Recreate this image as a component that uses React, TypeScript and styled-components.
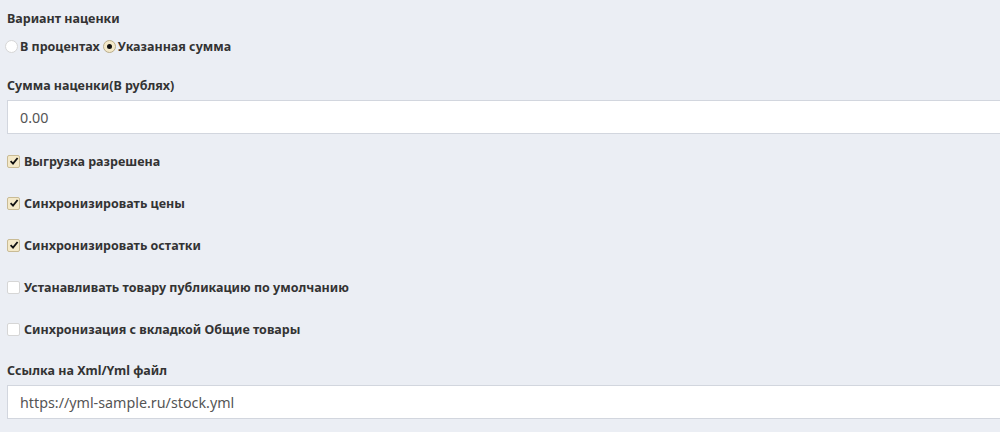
import { createGlobalStyle, styled } from 'styled-components';

const GlobalStyle = createGlobalStyle`
  html, body {
    margin: 0;
    padding: 0;
    background: #ebeef4;
  }
  body {
    font-family: "Noto Sans", "Open Sans", sans-serif;
    color: #333;
  }
`;

const CHECKS = [
  { label: 'Выгрузка разрешена', checked: true },
  { label: 'Синхронизировать цены', checked: true },
  { label: 'Синхронизировать остатки', checked: true },
  { label: 'Устанавливать товару публикацию по умолчанию', checked: false },
  { label: 'Синхронизация с вкладкой Общие товары', checked: false },
];

const CheckIcon = () => (
  <svg width="10" height="10" viewBox="0 0 10 10">
    <path d="M1.6 5.2 L4 7.6 L8.6 2" fill="none" stroke="#111" strokeWidth="1.8" />
  </svg>
);

const App = () => {
  return (
    <Page>
      <GlobalStyle />
      <Label>Вариант наценки</Label>
      <RadioRow>
        <RadioItem>
          <Radio $checked={false} />
          В процентах
        </RadioItem>
        <RadioItem>
          <Radio $checked />
          Указанная сумма
        </RadioItem>
      </RadioRow>

      <Label $top={22}>Сумма наценки(В рублях)</Label>
      <Input>0.00</Input>

      <CheckList>
        {CHECKS.map((c) => (
          <CheckRow key={c.label}>
            <Box $checked={c.checked}>{c.checked && <CheckIcon />}</Box>
            {c.label}
          </CheckRow>
        ))}
      </CheckList>

      <Label $top={24}>Ссылка на Xml/Yml файл</Label>
      <Input>https://yml-sample.ru/stock.yml</Input>
    </Page>
  );
};

export default App;

const Page = styled.div`
  width: 1000px;
  height: 432px;
  overflow: hidden;
  padding: 10px 0 0 7px;
  box-sizing: border-box;
`;

const Label = styled.div<{ $top?: number }>`
  margin-top: ${(p) => p.$top ?? 0}px;
  font-size: 12.5px;
  font-weight: 700;
  line-height: 18px;
  color: #333;
`;

const RadioRow = styled.div`
  display: flex;
  align-items: center;
  gap: 3px;
  margin-top: 9px;
  margin-left: -2px;
  height: 18px;
`;

const RadioItem = styled.label`
  display: flex;
  align-items: center;
  gap: 2px;
  font-size: 12.5px;
  font-weight: 700;
  color: #333;
`;

const Radio = styled.span<{ $checked: boolean }>`
  width: 11px;
  height: 11px;
  border-radius: 50%;
  border: 1px solid ${(p) => (p.$checked ? '#b9ad8c' : '#d6d6d6')};
  background: ${(p) => (p.$checked ? '#f4e9c9' : '#fff')};
  display: flex;
  align-items: center;
  justify-content: center;

  &::after {
    content: '';
    display: ${(p) => (p.$checked ? 'block' : 'none')};
    width: 5px;
    height: 5px;
    border-radius: 50%;
    background: #111;
  }
`;

const Input = styled.div`
  margin-top: 5px;
  height: 34px;
  width: 1010px;
  box-sizing: border-box;
  background: #fff;
  border: 1px solid #d2d6de;
  padding: 0 12px;
  display: flex;
  align-items: center;
  font-size: 14.3px;
  color: #555;
`;

const CheckList = styled.div`
  display: flex;
  flex-direction: column;
  gap: 24px;
  margin-top: 18px;
`;

const CheckRow = styled.label`
  display: flex;
  align-items: center;
  gap: 4px;
  height: 18px;
  font-size: 12.5px;
  font-weight: 700;
  color: #333;
`;

const Box = styled.span<{ $checked: boolean }>`
  width: 11px;
  height: 11px;
  border-radius: 2px;
  border: 1px solid ${(p) => (p.$checked ? '#c9bb95' : '#d6d6d6')};
  background: ${(p) => (p.$checked ? '#f4e9c9' : '#fff')};
  display: flex;
  align-items: center;
  justify-content: center;
`;
